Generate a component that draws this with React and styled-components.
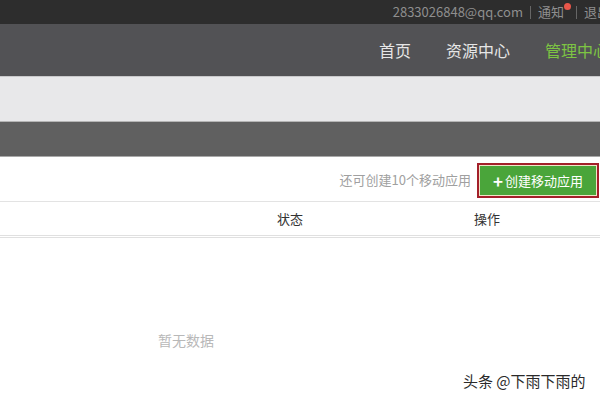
import React from 'react';
import styled, { createGlobalStyle } from 'styled-components';

const Global = createGlobalStyle`
    html, body {
        margin: 0;
        padding: 0;
        background: #fff;
        overflow: hidden;
        font-family: "Noto Sans CJK SC", "Noto Sans", sans-serif;
    }
`

const Page = styled.div`
    position: relative;
    width: 600px;
    height: 400px;
    overflow: hidden;
    background: #fff;
`

const TopBar = styled.div`
    height: 24px;
    background: #2d2d2d;
    display: flex;
    justify-content: flex-end;
    align-items: center;
    margin-right: -10px;
    font-size: 13px;
    color: #8f8f8f;
`

const TopItem = styled.span`
    position: relative;
    line-height: 24px;
`

const Sep = styled.span`
    width: 1px;
    height: 13px;
    background: #666;
    margin: 0 ${p => p.wide ? '7px 0 12px' : '7px'};
`

const Dot = styled.span`
    position: absolute;
    top: 3px;
    right: -7px;
    width: 7px;
    height: 7px;
    border-radius: 50%;
    background: #e8564a;
`

const Nav = styled.div`
    height: 52px;
    background: #525255;
    border-bottom: 1px solid #c9c9cb;
    display: flex;
    justify-content: flex-end;
    align-items: center;
    gap: 35px;
    margin-right: -9px;
`

const NavItem = styled.span`
    font-size: 16px;
    color: ${p => p.active ? '#7dc443' : '#e6e6e6'};
`

const LightBand = styled.div`
    height: 44px;
    background: #e8e8ea;
    border-bottom: 1px solid #b5b5b5;
`

const DarkBand = styled.div`
    height: 34px;
    background: #606060;
    border-bottom: 1px solid #a8a8a8;
`

const Toolbar = styled.div`
    height: 44px;
    display: flex;
    justify-content: flex-end;
    align-items: center;
    gap: 8px;
    padding-right: 3px;
    border-bottom: 1px solid #e3e3e3;
`

const Hint = styled.span`
    font-size: 13px;
    color: #a0a0a0;
`

const CreateButton = styled.button`
    width: 118px;
    height: 31px;
    padding: 0;
    margin-top: 2px;
    background: #4aa53a;
    border: 1px solid #f1e4c8;
    outline: 2px solid #a3202a;
    color: #fff;
    font-family: inherit;
    font-size: 13px;
    display: flex;
    align-items: center;
    justify-content: center;
    gap: 2px;

    b {
        font-size: 17px;
        font-weight: bold;
        line-height: 1;
    }
`

const HeadRow = styled.div`
    display: grid;
    grid-template-columns: 1fr 150px 244px;
    margin-right: -9px;
    height: 33px;
    align-items: center;
    border-bottom: 3px double #e0e0e0;
    font-size: 13px;
    color: #333;
`

const HeadCell = styled.span`
    text-align: center;
`

const Empty = styled.div`
    padding: 92px 0 0 158px;
    font-size: 14px;
    color: #b8b8b8;
`

const Watermark = styled.div`
    position: absolute;
    left: 463px;
    top: 370px;
    font-size: 15px;
    color: #2a2a2a;
    text-shadow: 0 0 2px #fff, 0 0 2px #fff;
`

export default function App() {
    return (
        <Page>
            <Global />
            <TopBar>
                <TopItem>2833026848@qq.com</TopItem>
                <Sep />
                <TopItem>通知<Dot /></TopItem>
                <Sep wide />
                <TopItem>退出</TopItem>
            </TopBar>
            <Nav>
                <NavItem>首页</NavItem>
                <NavItem>资源中心</NavItem>
                <NavItem active>管理中心</NavItem>
            </Nav>
            <LightBand />
            <DarkBand />
            <Toolbar>
                <Hint>还可创建10个移动应用</Hint>
                <CreateButton><b>+</b>创建移动应用</CreateButton>
            </Toolbar>
            <HeadRow>
                <span />
                <HeadCell>状态</HeadCell>
                <HeadCell>操作</HeadCell>
            </HeadRow>
            <Empty>暂无数据</Empty>
            <Watermark>头条 @下雨下雨的</Watermark>
        </Page>
    )
}
